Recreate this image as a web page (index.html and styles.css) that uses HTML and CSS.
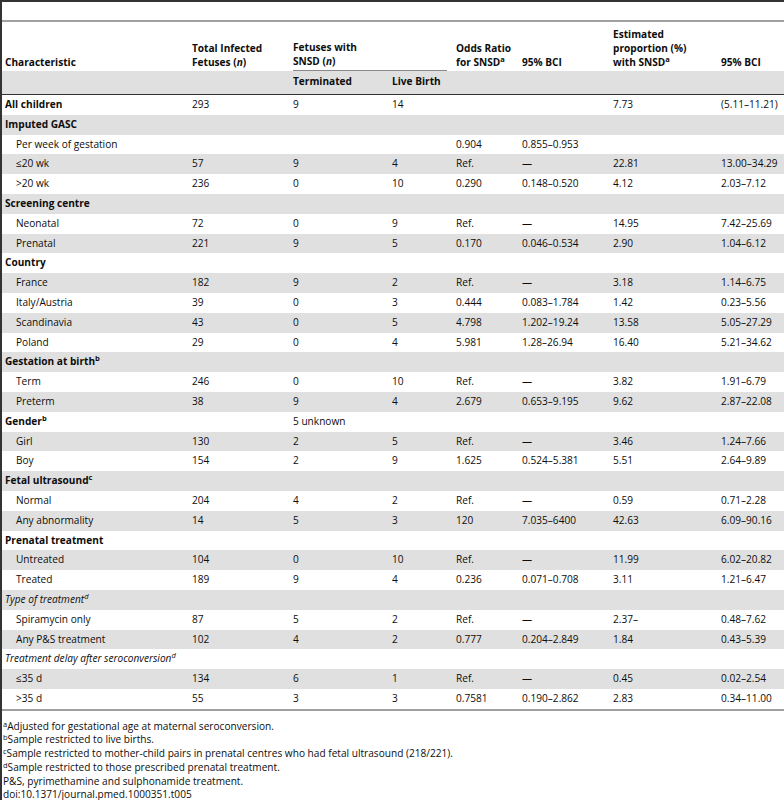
FILE: index.html
```html
<!DOCTYPE html>
<html lang="en">

<head>
  <meta charset="UTF-8">
  <meta name="viewport" content="width=device-width, initial-scale=1.0" />
  <title>Table 5 - SNSD by characteristic</title>
  <link rel="stylesheet" href="styles.css">
</head>

<body>

  <div class="table-box">
    <table class="data-table">
      <colgroup>
        <col class="c-char">
        <col class="c-total">
        <col class="c-term">
        <col class="c-live">
        <col class="c-odds">
        <col class="c-bci">
        <col class="c-est">
        <col class="c-bci2">
      </colgroup>
      <thead>
        <tr class="head-top">
          <th>Characteristic</th>
          <th>Total Infected<br>Fetuses (<i>n</i>)</th>
          <th colspan="2" class="span-head"><div class="span-line">Fetuses with<br>SNSD (<i>n</i>)</div></th>
          <th>Odds Ratio<br>for SNSD<sup>a</sup></th>
          <th>95% BCI</th>
          <th>Estimated<br>proportion (%)<br>with SNSD<sup>a</sup></th>
          <th>95% BCI</th>
        </tr>
        <tr class="head-sub">
          <th></th>
          <th></th>
          <th>Terminated</th>
          <th>Live Birth</th>
          <th></th>
          <th></th>
          <th></th>
          <th></th>
        </tr>
      </thead>
      <tbody>
        <tr><td class="group">All children</td><td>293</td><td>9</td><td>14</td><td></td><td></td><td>7.73</td><td>(5.11–11.21)</td></tr>
        <tr><td class="group" colspan="8">Imputed GASC</td></tr>
        <tr><td class="sub">Per week of gestation</td><td></td><td></td><td></td><td>0.904</td><td>0.855–0.953</td><td></td><td></td></tr>
        <tr><td class="sub">≤20 wk</td><td>57</td><td>9</td><td>4</td><td>Ref.</td><td>—</td><td>22.81</td><td>13.00–34.29</td></tr>
        <tr><td class="sub">&gt;20 wk</td><td>236</td><td>0</td><td>10</td><td>0.290</td><td>0.148–0.520</td><td>4.12</td><td>2.03–7.12</td></tr>
        <tr><td class="group" colspan="8">Screening centre</td></tr>
        <tr><td class="sub">Neonatal</td><td>72</td><td>0</td><td>9</td><td>Ref.</td><td>—</td><td>14.95</td><td>7.42–25.69</td></tr>
        <tr><td class="sub">Prenatal</td><td>221</td><td>9</td><td>5</td><td>0.170</td><td>0.046–0.534</td><td>2.90</td><td>1.04–6.12</td></tr>
        <tr><td class="group" colspan="8">Country</td></tr>
        <tr><td class="sub">France</td><td>182</td><td>9</td><td>2</td><td>Ref.</td><td>—</td><td>3.18</td><td>1.14–6.75</td></tr>
        <tr><td class="sub">Italy/Austria</td><td>39</td><td>0</td><td>3</td><td>0.444</td><td>0.083–1.784</td><td>1.42</td><td>0.23–5.56</td></tr>
        <tr><td class="sub">Scandinavia</td><td>43</td><td>0</td><td>5</td><td>4.798</td><td>1.202–19.24</td><td>13.58</td><td>5.05–27.29</td></tr>
        <tr><td class="sub">Poland</td><td>29</td><td>0</td><td>4</td><td>5.981</td><td>1.28–26.94</td><td>16.40</td><td>5.21–34.62</td></tr>
        <tr><td class="group" colspan="8">Gestation at birth<sup>b</sup></td></tr>
        <tr><td class="sub">Term</td><td>246</td><td>0</td><td>10</td><td>Ref.</td><td>—</td><td>3.82</td><td>1.91–6.79</td></tr>
        <tr><td class="sub">Preterm</td><td>38</td><td>9</td><td>4</td><td>2.679</td><td>0.653–9.195</td><td>9.62</td><td>2.87–22.08</td></tr>
        <tr><td class="group">Gender<sup>b</sup></td><td></td><td colspan="2">5 unknown</td><td></td><td></td><td></td><td></td></tr>
        <tr><td class="sub">Girl</td><td>130</td><td>2</td><td>5</td><td>Ref.</td><td>—</td><td>3.46</td><td>1.24–7.66</td></tr>
        <tr><td class="sub">Boy</td><td>154</td><td>2</td><td>9</td><td>1.625</td><td>0.524–5.381</td><td>5.51</td><td>2.64–9.89</td></tr>
        <tr><td class="group" colspan="8">Fetal ultrasound<sup>c</sup></td></tr>
        <tr><td class="sub">Normal</td><td>204</td><td>4</td><td>2</td><td>Ref.</td><td>—</td><td>0.59</td><td>0.71–2.28</td></tr>
        <tr><td class="sub">Any abnormality</td><td>14</td><td>5</td><td>3</td><td>120</td><td>7.035–6400</td><td>42.63</td><td>6.09–90.16</td></tr>
        <tr><td class="group" colspan="8">Prenatal treatment</td></tr>
        <tr><td class="sub">Untreated</td><td>104</td><td>0</td><td>10</td><td>Ref.</td><td>—</td><td>11.99</td><td>6.02–20.82</td></tr>
        <tr><td class="sub">Treated</td><td>189</td><td>9</td><td>4</td><td>0.236</td><td>0.071–0.708</td><td>3.11</td><td>1.21–6.47</td></tr>
        <tr><td class="subgroup" colspan="8">Type of treatment<sup>d</sup></td></tr>
        <tr><td class="sub">Spiramycin only</td><td>87</td><td>5</td><td>2</td><td>Ref.</td><td>—</td><td>2.37–</td><td>0.48–7.62</td></tr>
        <tr><td class="sub">Any P&amp;S treatment</td><td>102</td><td>4</td><td>2</td><td>0.777</td><td>0.204–2.849</td><td>1.84</td><td>0.43–5.39</td></tr>
        <tr><td class="subgroup" colspan="8">Treatment delay after seroconversion<sup>d</sup></td></tr>
        <tr><td class="sub">≤35 d</td><td>134</td><td>6</td><td>1</td><td>Ref.</td><td>—</td><td>0.45</td><td>0.02–2.54</td></tr>
        <tr><td class="sub">&gt;35 d</td><td>55</td><td>3</td><td>3</td><td>0.7581</td><td>0.190–2.862</td><td>2.83</td><td>0.34–11.00</td></tr>
      </tbody>
    </table>

    <div class="notes">
      <p><sup>a</sup>Adjusted for gestational age at maternal seroconversion.</p>
      <p><sup>b</sup>Sample restricted to live births.</p>
      <p><sup>c</sup>Sample restricted to mother-child pairs in prenatal centres who had fetal ultrasound (218/221).</p>
      <p><sup>d</sup>Sample restricted to those prescribed prenatal treatment.</p>
      <p>P&amp;S, pyrimethamine and sulphonamide treatment.</p>
      <p>doi:10.1371/journal.pmed.1000351.t005</p>
    </div>
  </div>

</body>

</html>
```

FILE: styles.css
```css
:root {
  --text-color: #0d0d0d;
  --stripe-bg: #e0e0e0;
  --rule-dark: #333333;
  --rule-grey: #a0a0a0;
  --font-family: 'Open Sans', 'Liberation Sans', Arial, sans-serif;
}

* {
  margin: 0;
  padding: 0;
  box-sizing: border-box;
}

html,
body {
  background: #ffffff;
  font-family: var(--font-family);
  font-size: 10.1px;
  letter-spacing: 0.01px;
  color: var(--text-color);
  overflow: hidden;
}

.table-box {
  border-top: 2px solid var(--rule-dark);
  border-left: 2px solid var(--rule-dark);
  padding-top: 18px;
  min-height: 800px;
}

.data-table {
  width: 782px;
  table-layout: fixed;
  border-collapse: separate;
  border-spacing: 0;
  border-top: 2px solid var(--rule-grey);
}

.c-char { width: 187px; }
.c-total { width: 101px; }
.c-term { width: 99px; }
.c-live { width: 64px; }
.c-odds { width: 66px; }
.c-bci { width: 91px; }
.c-est { width: 108px; }
.c-bci2 { width: 66px; }

th {
  text-align: left;
  font-weight: bold;
  line-height: 14px;
  vertical-align: bottom;
  white-space: nowrap;
}

.head-top th {
  padding: 5px 3px 2px 3px;
}

.head-top .span-head {
  padding: 5px 6px 0 3px;
}

.span-line {
  padding-bottom: 2px;
  border-bottom: 1px solid #8a8a8a;
}

.head-sub th {
  background: var(--stripe-bg);
  padding: 3px 3px 6px 3px;
  border-bottom: 1px solid var(--rule-dark);
}

sup {
  font-size: 7.5px;
  line-height: 0;
  vertical-align: 4px;
}

td {
  padding: 2px 3px;
  line-height: 15.8px;
  white-space: nowrap;
  vertical-align: middle;
}

tbody tr:nth-child(even) td {
  background: var(--stripe-bg);
}

tbody tr:last-child td {
  border-bottom: 2px solid var(--rule-grey);
}

.group {
  font-weight: bold;
}

.subgroup {
  font-style: italic;
}

.sub {
  padding-left: 14px;
}

.notes {
  padding: 9px 0 0 1px;
}

.notes p {
  line-height: 13.7px;
  white-space: nowrap;
}

.notes sup {
  vertical-align: 3px;
}
```
